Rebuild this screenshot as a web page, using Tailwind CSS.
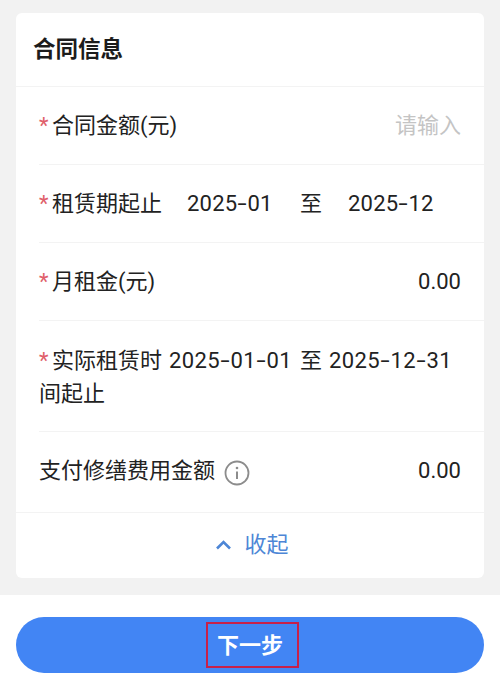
<!DOCTYPE html>
<html lang="zh">
<head>
<meta charset="utf-8">
<script src="https://cdn.jsdelivr.net/npm/@tailwindcss/browser@4"></script>
</head>
<body class="m-0">
<div class="w-[500px] h-[694px] flex flex-col bg-[#f2f2f2] overflow-hidden text-[#222222] font-['Roboto','Noto_Sans_CJK_SC',sans-serif] text-[22px]">
  <div class="h-[595px] shrink-0 pt-[13px] px-[16px]">
    <div class="w-[468px] h-[565px] bg-white rounded-[6px] flex flex-col">
      <div class="h-[74px] shrink-0 flex items-center pl-[17px] pt-[1px] border-b border-[#f3f3f3] text-[22.5px] font-bold text-[#1c1c1c]">合同信息</div>
      <div class="pl-[23px] flex flex-col">
        <div class="h-[78px] flex items-center justify-between pr-[23px] border-b border-[#f3f3f3]">
          <div class="flex items-center"><span class="text-[#e0606a] w-[13px]">*</span><span>合同金额(元)</span></div>
          <span class="text-[#c4c4c4]">请输入</span>
        </div>
        <div class="h-[78px] flex items-center border-b border-[#f3f3f3]">
          <span class="text-[#e0606a] w-[13px]">*</span><span class="w-[135px]">租赁期起止</span><span class="w-[113px] tracking-[0.2px]">2025<span class="inline-block mx-[2px] scale-x-150">-</span>01</span><span class="w-[48px]">至</span><span class="tracking-[0.2px]">2025<span class="inline-block mx-[2px] scale-x-150">-</span>12</span>
        </div>
        <div class="h-[78px] flex items-center justify-between pr-[23px] border-b border-[#f3f3f3]">
          <div class="flex items-center"><span class="text-[#e0606a] w-[13px]">*</span><span>月租金(元)</span></div>
          <span>0.00</span>
        </div>
        <div class="h-[111px] flex flex-col justify-center border-b border-[#f3f3f3] leading-[33px] pt-[1px]">
          <div class="flex"><span class="text-[#e0606a] w-[13px]">*</span><span class="w-[117px]">实际租赁时</span><span class="w-[131px] tracking-[0.4px] whitespace-nowrap">2025<span class="inline-block mx-[2px] scale-x-150">-</span>01<span class="inline-block mx-[2px] scale-x-150">-</span>01</span><span class="w-[29px]">至</span><span class="tracking-[0.4px] whitespace-nowrap">2025<span class="inline-block mx-[2px] scale-x-150">-</span>12<span class="inline-block mx-[2px] scale-x-150">-</span>31</span></div>
          <div>间起止</div>
        </div>
      </div>
      <div class="pl-[23px] h-[81px] shrink-0 flex items-center justify-between pr-[23px] border-b border-[#f3f3f3] pb-[3px]">
        <div class="flex items-center gap-[9px]">
          <span>支付修缮费用金额</span>
          <svg class="w-[26px] h-[26px] mt-[4px]" viewBox="0 0 26 26" fill="none"><circle cx="13" cy="13" r="11.5" stroke="#8c8c8c" stroke-width="1.8"/><circle cx="13" cy="8" r="1.3" fill="#8c8c8c"/><path d="M13 11.5V19" stroke="#8c8c8c" stroke-width="2"/></svg>
        </div>
        <span>0.00</span>
      </div>
      <div class="flex-1 flex items-center justify-center gap-[12px] text-[#4d86d6] pl-[4px] pb-[2px]">
        <svg class="w-[17px] h-[10px]" viewBox="0 0 17 10" fill="none"><path d="M2 8.5L8.5 2L15 8.5" stroke="#4d86d6" stroke-width="2.6"/></svg>
        <span>收起</span>
      </div>
    </div>
  </div>
  <div class="flex-1 bg-white px-[16px] pt-[22px]">
    <div class="h-[56px] rounded-full bg-[#4285f4] flex items-center justify-center">
      <div class="w-[93px] h-[46px] ml-[4px] pr-[4px] border-2 border-[#c8204a] flex items-center justify-center text-white font-bold text-[22px]">下一步</div>
    </div>
  </div>
</div>
</body>
</html>
